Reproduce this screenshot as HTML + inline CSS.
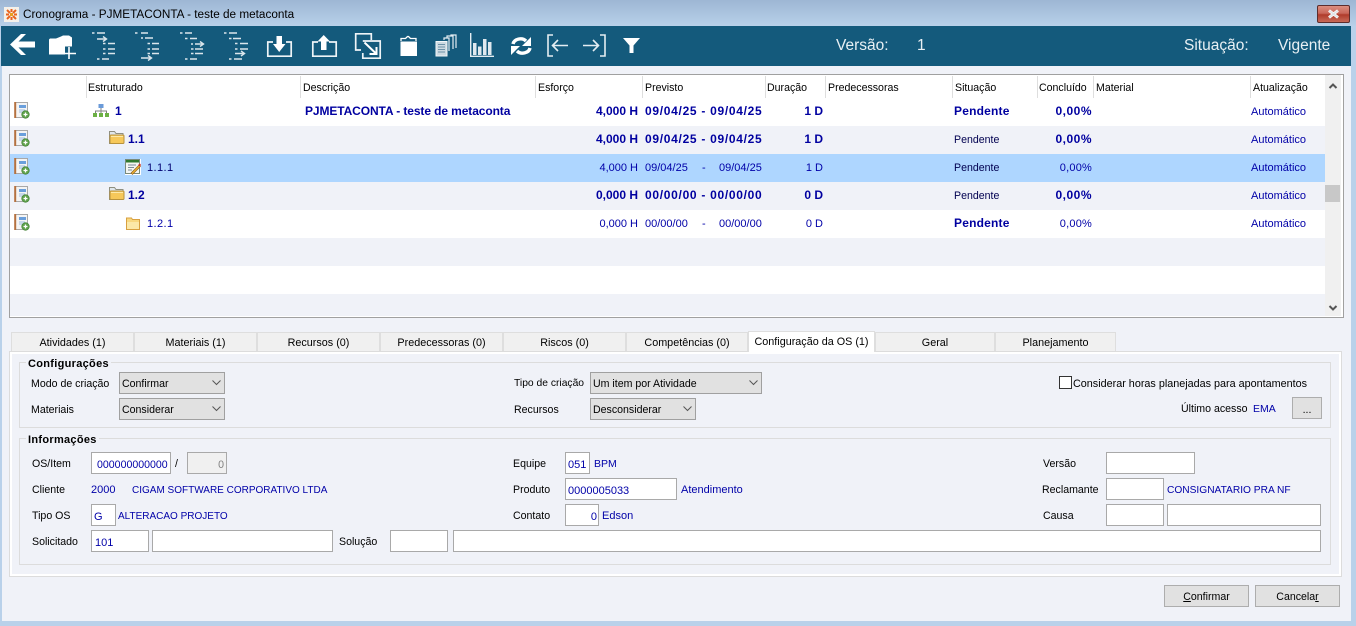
<!DOCTYPE html>
<html lang="pt"><head><meta charset="utf-8"><title>Cronograma</title>
<style>
html,body{margin:0;padding:0;width:1356px;height:626px;overflow:hidden;background:#b9d1ea}
body{position:relative;font:10.6px/14px "Liberation Sans",sans-serif;color:#000}
div,span{position:absolute;box-sizing:border-box}
.t{white-space:nowrap;height:14px;margin-top:1px}
.n{color:#0000a8;font-size:11px}
.nb{color:#0000a0;font-weight:bold;font-size:12px}
.d{letter-spacing:.7px}
.p{letter-spacing:.2px}
.k{letter-spacing:.5px}
.r{text-align:right}
.i{background:#fff;border:1px solid #a9a9a9}
.s{background:#e1e1e1;border:1px solid #a0a0a0}
.btn{background:#e1e1e1;border:1px solid #adadad;text-align:center;line-height:22px}
.tab{top:332px;height:19px;background:#f0f0f0;border:1px solid #dedede;border-bottom:0;text-align:center;line-height:20px;font-size:10.8px}
.sep{top:76px;width:1px;height:22px;background:#dedede}
.row{left:10px;width:1315px;height:28px}
.fs{border:1px solid #dcdcdc}
.lg{background:#f0f2f8;padding:0 2px;font-weight:bold;height:14px;white-space:nowrap;font-size:11px;letter-spacing:.3px}
.top{margin-top:0;height:16px;line-height:16px;font-size:15.5px;color:#e8f0f4}
svg{position:absolute;overflow:visible}
u{text-decoration:underline}
</style></head><body>

<!-- title bar -->
<div style="left:0;top:0;width:1356px;height:26px;background:linear-gradient(#9db6d4,#b8d0e9)"></div>
<svg style="left:4px;top:7px" width="15" height="15" viewBox="0 0 15 15"><rect width="15" height="15" fill="#f4f1ea"/><path d="M3 3l3 3M3 12l3-3M12 3L9 6M12 12L9 9M7.500 2v3M7.500 10v3M2 7.500h3M10 7.500h3" stroke="#e8641e" stroke-width="2"/><rect x="6" y="6" width="3" height="3" fill="#e8a01e"/></svg>
<span class="t" style="left:23px;top:7px;font-size:11.75px">Cronograma - PJMETACONTA - teste de metaconta</span>
<div style="left:1317px;top:5px;width:33px;height:18px;border:1px solid #5c2d2d;border-radius:2px;background:linear-gradient(#dc8f80 0,#c9675a 45%,#b03c2c 55%,#c86a58 100%)"></div>
<svg style="left:1326px;top:9px" width="15" height="10" viewBox="0 0 15 10"><path d="M3 1.500l9 7M12 1.500l-9 7" stroke="#fff" stroke-width="3"/><path d="M3 1.500l9 7M12 1.500l-9 7" stroke="#dfe4e8" stroke-width="1.500"/></svg>

<!-- main surface -->
<div style="left:2px;top:26px;width:1349px;height:595px;background:#f0f2f8"></div>
<!-- toolbar -->
<div style="left:1px;top:26px;width:1350px;height:40px;background:#145a7c"></div>
<svg style="left:0;top:0" width="700" height="66" viewBox="0 0 700 66">
 <polygon points="10,44.500 21,34 26,34 18.500,41.500 35,41.500 35,47.500 18.500,47.500 26,55 21,55" fill="#fff"/>
 <path d="M49 39.500l1-1h6l5-2 2-1h6l3 2v9h-7v8H49z" fill="#fff"/>
 <path d="M69 47v12M62 53.500h14" stroke="#fff" stroke-width="1.600" fill="none"/>
 <g stroke="#dbe6ec" stroke-width="1.400" fill="none">
  <path d="M92 33h2.500M97 33h8M97 39h9M103 43.500h2.500M108 43.500h7M103 49h2.500M108 49h7M103 53.500h2.500M108 53.500h7M97 59h2.500M102 59h7"/>
  <path d="M103 36.500l3.500 2.500-3.500 2.500"/>
  <path d="M135 33h2.500M141 33h7M141 38h2M145 38h8M147.500 43.500h2.500M152 43.500h7M147.500 49h2.500M152 49h7M147.500 53.500h2.500M152 53.500h7M141 58h10"/>
  <path d="M148 55.500l3.500 2.500-3.500 2.500"/>
  <path d="M180 33h2.500M185 33h7M185 38.500h2.500M190 38.500h7M191 44h2M195 44h8M191 49h2.500M195 49h8M191 53.500h2.500M195 53.500h8M185 59h2.500M190 59h7"/>
  <path d="M200 41.500l3.500 2.500-3.500 2.500"/>
  <path d="M224 33h2.500M229 33h8M229 38.500h2.500M233 38.500h8M235 43.500h2.500M240 43.500h8M235 49h2.500M240 49h8M235 53.500h9M229 59h2.500M234 59h8"/>
  <path d="M241 51l3.500 2.500-3.500 2.500"/>
 </g>
 <g fill="none" stroke="#eef4f7" stroke-width="1.700">
  <path d="M273 42h-5.200v14.200h23.400V42H286"/>
  <path d="M318 42h-5.200v14.200h23.400V42H329"/>
  <path d="M361 50h-5.300V33.800h15.600V40"/>
  <path d="M362.800 41h17.400v17.200h-17.400V53"/>
 </g>
 <polygon points="276.500,36 282,36 282,44 285.500,44 279.200,52 273,44 276.500,44" fill="#fff"/>
 <polygon points="321,50 326.500,50 326.500,41.500 330,41.500 323.700,35 317.500,41.500 321,41.500" fill="#fff"/>
 <path d="M364.500 42.500l11.500 11M376.500 47v7h-7" fill="none" stroke="#fff" stroke-width="2"/>
 <path d="M400.500 41.500h16.500V56h-16.500z" fill="#fff"/>
 <path d="M401 41v-2.500h4.500l2-2 1 0 2 2h5.500V41" fill="none" stroke="#fff" stroke-width="1.300"/>
 <g fill="none" stroke="#e4edf2">
  <path d="M444 40v-2h5v13M447 37.500v-1.500h6v13M451 35.500v-.5h5v13" stroke-width="1.200"/>
  <rect x="436" y="41.500" width="11" height="14.500" fill="#cddae2" stroke="#f2f6f8"/>
  <path d="M438 44.500h7M438 47h7M438 49.500h7M438 52h7" stroke="#6d92a8"/>
  <path d="M470.700 33v23.300H494" stroke-width="1.400"/>
 </g>
 <path d="M473 43h3.500v12H473zM478 46.500h3.500V55H478zM483 39h3.500v16H483zM488 42h3.500v13H488z" fill="#dfe8ee"/>
 <g fill="none" stroke="#fff" stroke-width="3.400">
  <path d="M513 44c1-5 9-7 13-3"/>
  <path d="M530 48c-1 5-9 7-13 3"/>
 </g>
 <path d="M531 37v9h-9zM511 55v-9h9z" fill="#fff"/>
 <g fill="none" stroke="#e4edf2" stroke-width="1.600">
  <path d="M553 35h-5v21h5M568 45.500h-15M558 40l-5.500 5.500 5.500 5.500"/>
  <path d="M600 35h5v21h-5M583 45.500h15M593 40l5.500 5.500-5.500 5.500"/>
 </g>
 <path d="M623 38h17l-6.500 7.500V53h-4v-7.500z" fill="#fff"/>
</svg>
<span class="t top" style="left:836px;top:38px">Versão:</span>
<span class="t top" style="left:917px;top:38px">1</span>
<span class="t top" style="left:1184px;top:38px">Situação:</span>
<span class="t top" style="left:1278px;top:38px">Vigente</span>

<!-- grid -->
<div style="left:9px;top:74px;width:1335px;height:244px;background:#fff;border:1px solid #a0a0a0"></div>
<div class="row" style="top:126px;background:#f0f2f8"></div>
<div class="row" style="top:154px;background:#aed6ff"></div>
<div class="row" style="top:182px;background:#f0f2f8"></div>
<div class="row" style="top:238px;background:#f0f2f8"></div>
<div class="row" style="top:294px;height:22px;background:#f0f2f8"></div>
<div style="left:1325px;top:75px;width:16px;height:241px;background:#f0f0f0"></div>
<div style="left:1325px;top:185px;width:15px;height:17px;background:#c8c8c8"></div>
<svg style="left:1328px;top:82px" width="10" height="8"><path d="M1.500 6L5 2.500 8.500 6" fill="none" stroke="#555" stroke-width="2"/></svg>
<svg style="left:1328px;top:304px" width="10" height="8"><path d="M1.500 2L5 5.500 8.500 2" fill="none" stroke="#555" stroke-width="2"/></svg>

<div class="sep" style="left:86px"></div><div class="sep" style="left:300px"></div><div class="sep" style="left:535px"></div><div class="sep" style="left:642px"></div><div class="sep" style="left:765px"></div><div class="sep" style="left:825px"></div><div class="sep" style="left:952px"></div><div class="sep" style="left:1037px"></div><div class="sep" style="left:1093px"></div><div class="sep" style="left:1250px"></div>
<span class="t" style="left:88px;top:80px">Estruturado</span>
<span class="t" style="left:303px;top:80px">Descrição</span>
<span class="t" style="left:538px;top:80px">Esforço</span>
<span class="t" style="left:645px;top:80px">Previsto</span>
<span class="t" style="left:767px;top:80px">Duração</span>
<span class="t" style="left:828px;top:80px">Predecessoras</span>
<span class="t" style="left:955px;top:80px">Situação</span>
<span class="t" style="left:1039px;top:80px">Concluído</span>
<span class="t" style="left:1096px;top:80px">Material</span>
<span class="t" style="left:1253px;top:80px">Atualização</span>

<!-- row icons -->
<svg width="0" height="0" style="left:0;top:0"><defs>
 <g id="ri">
  <rect x="1" y="0.500" width="12.500" height="15" fill="#f4f4f4" stroke="#a8a8a8"/>
  <path d="M1.200 0v16" stroke="#b5713f" stroke-width="2"/>
  <rect x="5" y="3" width="7" height="3" fill="#6a9fdc"/>
  <path d="M5 8h6M5 10h4" stroke="#9dbde0"/>
  <circle cx="11.500" cy="12.500" r="3.800" fill="#5ea04a" stroke="#3f7f33" stroke-width=".6"/>
  <path d="M9.500 12.500h4M11.500 10.500v4" stroke="#fff" stroke-width="1.300"/>
 </g>
 <g id="fo">
  <path d="M.5 1.500h5l1.500 2h7v10H.5z" fill="#dfe6ec" stroke="#8f8f80"/>
  <rect x="1" y="5" width="14" height="8.500" rx="1" fill="#f6c85a" stroke="#b8923c"/>
  <path d="M2 6.500h12" stroke="#fde9a8"/>
 </g>
</defs></svg>
<svg style="left:14px;top:102px" width="16" height="16"><use href="#ri"/></svg>
<svg style="left:14px;top:130px" width="16" height="16"><use href="#ri"/></svg>
<svg style="left:14px;top:158px" width="16" height="16"><use href="#ri"/></svg>
<svg style="left:14px;top:186px" width="16" height="16"><use href="#ri"/></svg>
<svg style="left:14px;top:214px" width="16" height="16"><use href="#ri"/></svg>

<svg style="left:93px;top:104px" width="16" height="14"><rect x="5.500" y="0" width="5" height="4" fill="#6a9ad8"/><path d="M8 4v3M2.500 9V7h11v2M8 7v2" stroke="#808080" fill="none"/><rect x="0" y="9" width="4" height="4" fill="#6cb044"/><rect x="6" y="9" width="4" height="4" fill="#6cb044"/><rect x="12" y="9" width="4" height="4" fill="#6cb044"/></svg>
<svg style="left:109px;top:130px" width="16" height="15"><use href="#fo"/></svg>
<svg style="left:109px;top:186px" width="16" height="15"><use href="#fo"/></svg>
<svg style="left:125px;top:159px" width="16" height="16"><rect width="16" height="16" fill="#fff"/><rect x=".5" y=".5" width="14" height="14" fill="#f4f6f2" stroke="#7a8a7a"/><rect x="1" y="1" width="13" height="2.500" fill="#2f7a2f"/><path d="M3 6h8M3 8.500h6M3 11h4" stroke="#7a8a98"/><path d="M6 14l8-8 1.500 1.500-8 8z" fill="#e8b030" stroke="#8a5a20" stroke-width=".6"/><path d="M13 6l2-1.500 1 1.500-1 1.500z" fill="#c83020"/></svg>
<svg style="left:126px;top:217px" width="14" height="13"><path d="M.5 2.500V1h5l1 1.500h7v10H.5z" fill="#f8d880" stroke="#d8a040"/><path d="M1 5h12v7H1z" fill="#fbe8a8"/></svg>

<span class="t nb" style="left:115px;top:103px">1</span>
<span class="t nb" style="left:305px;top:103px;letter-spacing:-.1px">PJMETACONTA - teste de metaconta</span>
<span class="t nb r" style="right:718px;top:103px">4,000 H</span>
<span class="t nb d" style="left:645px;top:103px">09/04/25 - 09/04/25</span>
<span class="t nb r" style="right:533px;top:103px">1 D</span>
<span class="t nb p" style="left:954px;top:103px">Pendente</span>
<span class="t nb r k" style="right:264px;top:103px">0,00%</span>
<span class="t n" style="left:1251px;top:104px">Automático</span>

<span class="t nb" style="left:128px;top:131px">1.1</span>
<span class="t nb r" style="right:718px;top:131px">4,000 H</span>
<span class="t nb d" style="left:645px;top:131px">09/04/25 - 09/04/25</span>
<span class="t nb r" style="right:533px;top:131px">1 D</span>
<span class="t" style="left:954px;top:132px;color:#000050">Pendente</span>
<span class="t nb r k" style="right:264px;top:131px">0,00%</span>
<span class="t n" style="left:1251px;top:132px">Automático</span>

<span class="t n" style="left:147px;top:160px;color:#000070;letter-spacing:.4px">1.1.1</span>
<span class="t n r" style="right:718px;top:160px">4,000 H</span>
<span class="t n" style="left:645px;top:160px">09/04/25</span><span class="t n" style="left:702px;top:160px">-</span><span class="t n" style="left:719px;top:160px">09/04/25</span>
<span class="t n r" style="right:533px;top:160px">1 D</span>
<span class="t" style="left:954px;top:160px;color:#000050">Pendente</span>
<span class="t n r" style="right:264px;top:160px;letter-spacing:.2px">0,00%</span>
<span class="t n" style="left:1251px;top:160px">Automático</span>

<span class="t nb" style="left:128px;top:187px">1.2</span>
<span class="t nb r" style="right:718px;top:187px">0,000 H</span>
<span class="t nb d" style="left:645px;top:187px">00/00/00 - 00/00/00</span>
<span class="t nb r" style="right:533px;top:187px">0 D</span>
<span class="t" style="left:954px;top:188px;color:#000050">Pendente</span>
<span class="t nb r k" style="right:264px;top:187px">0,00%</span>
<span class="t n" style="left:1251px;top:188px">Automático</span>

<span class="t n" style="left:147px;top:216px;letter-spacing:.4px">1.2.1</span>
<span class="t n r" style="right:718px;top:216px">0,000 H</span>
<span class="t n" style="left:645px;top:216px">00/00/00</span><span class="t n" style="left:702px;top:216px">-</span><span class="t n" style="left:719px;top:216px">00/00/00</span>
<span class="t n r" style="right:533px;top:216px">0 D</span>
<span class="t nb p" style="left:954px;top:215px">Pendente</span>
<span class="t n r" style="right:264px;top:216px;letter-spacing:.2px">0,00%</span>
<span class="t n" style="left:1251px;top:216px">Automático</span>

<!-- tab panel -->
<div style="left:9px;top:351px;width:1333px;height:226px;background:#f0f2f8;border:1px solid #dcdcdc;box-shadow:inset 0 0 0 2px #fff"></div>
<div class="tab" style="left:11px;width:123px">Atividades (1)</div>
<div class="tab" style="left:134px;width:123px">Materiais (1)</div>
<div class="tab" style="left:257px;width:123px">Recursos (0)</div>
<div class="tab" style="left:380px;width:123px">Predecessoras (0)</div>
<div class="tab" style="left:503px;width:123px">Riscos (0)</div>
<div class="tab" style="left:626px;width:122px">Competências (0)</div>
<div class="tab" style="left:748px;top:331px;width:127px;height:21px;background:#fff;line-height:20px;z-index:2">Configuração da OS (1)</div>
<div class="tab" style="left:875px;width:120px">Geral</div>
<div class="tab" style="left:995px;width:121px">Planejamento</div>

<div class="fs" style="left:19px;top:362px;width:1312px;height:66px"></div>
<span class="lg" style="left:26px;top:357px">Configurações</span>
<div class="fs" style="left:19px;top:438px;width:1312px;height:127px"></div>
<span class="lg" style="left:26px;top:433px">Informações</span>

<span class="t" style="left:31px;top:376px">Modo de criação</span>
<div class="s" style="left:119px;top:372px;width:106px;height:22px"></div>
<span class="t" style="left:122px;top:376px">Confirmar</span>
<span class="t" style="left:31px;top:402px">Materiais</span>
<div class="s" style="left:119px;top:398px;width:106px;height:22px"></div>
<span class="t" style="left:122px;top:402px">Considerar</span>
<span class="t" style="left:514px;top:376px;font-size:10.3px">Tipo de criação</span>
<div class="s" style="left:590px;top:372px;width:172px;height:22px"></div>
<span class="t" style="left:593px;top:376px">Um item por Atividade</span>
<span class="t" style="left:514px;top:402px">Recursos</span>
<div class="s" style="left:590px;top:398px;width:106px;height:22px"></div>
<span class="t" style="left:593px;top:402px">Desconsiderar</span>
<svg style="left:212px;top:380px" width="9" height="6"><path d="M.5.500l4 4 4-4" fill="none" stroke="#555"/></svg>
<svg style="left:212px;top:406px" width="9" height="6"><path d="M.5.500l4 4 4-4" fill="none" stroke="#555"/></svg>
<svg style="left:749px;top:380px" width="9" height="6"><path d="M.5.500l4 4 4-4" fill="none" stroke="#555"/></svg>
<svg style="left:683px;top:406px" width="9" height="6"><path d="M.5.500l4 4 4-4" fill="none" stroke="#555"/></svg>

<div style="left:1059px;top:376px;width:13px;height:13px;background:#fff;border:1px solid #333"></div>
<span class="t" style="left:1073px;top:376px;font-size:10.8px">Considerar horas planejadas para apontamentos</span>
<span class="t" style="left:1181px;top:401px">Último acesso</span>
<span class="t n" style="left:1253px;top:401px;font-size:10.5px">EMA</span>
<div class="btn" style="left:1292px;top:397px;width:30px;height:22px;line-height:24px">...</div>

<span class="t" style="left:32px;top:456px">OS/Item</span>
<div class="i" style="left:91px;top:452px;width:80px;height:22px"></div>
<span class="t n" style="left:97px;top:457px;font-size:10.6px">000000000000</span>
<span class="t" style="left:175px;top:456px">/</span>
<div style="left:187px;top:452px;width:40px;height:22px;background:#f0f0f0;border:1px solid #a9a9a9"></div>
<span class="t r" style="right:1132px;top:457px;color:#808080">0</span>

<span class="t" style="left:32px;top:482px">Cliente</span>
<span class="t n" style="left:91px;top:482px">2000</span>
<span class="t n" style="left:132px;top:483px;font-size:10px">CIGAM SOFTWARE CORPORATIVO LTDA</span>

<span class="t" style="left:32px;top:508px">Tipo OS</span>
<div class="i" style="left:91px;top:504px;width:25px;height:22px"></div>
<span class="t n" style="left:94px;top:509px">G</span>
<span class="t n" style="left:118px;top:509px;font-size:10px">ALTERACAO PROJETO</span>

<span class="t" style="left:32px;top:534px">Solicitado</span>
<div class="i" style="left:91px;top:530px;width:58px;height:22px"></div>
<span class="t n" style="left:95px;top:535px">101</span>
<div class="i" style="left:152px;top:530px;width:181px;height:22px"></div>
<span class="t" style="left:339px;top:534px">Solução</span>
<div class="i" style="left:390px;top:530px;width:58px;height:22px"></div>
<div class="i" style="left:453px;top:530px;width:868px;height:22px"></div>

<span class="t" style="left:513px;top:456px">Equipe</span>
<div class="i" style="left:565px;top:452px;width:25px;height:22px"></div>
<span class="t n" style="left:568px;top:457px">051</span>
<span class="t n" style="left:594px;top:456px;font-size:10.5px">BPM</span>
<span class="t" style="left:513px;top:482px">Produto</span>
<div class="i" style="left:565px;top:478px;width:112px;height:22px"></div>
<span class="t n" style="left:568px;top:483px">0000005033</span>
<span class="t n" style="left:681px;top:482px">Atendimento</span>
<span class="t" style="left:513px;top:508px">Contato</span>
<div class="i" style="left:565px;top:504px;width:34px;height:22px"></div>
<span class="t n r" style="right:759px;top:509px">0</span>
<span class="t n" style="left:602px;top:508px">Edson</span>

<span class="t" style="left:1043px;top:456px">Versão</span>
<div class="i" style="left:1106px;top:452px;width:89px;height:22px"></div>
<span class="t" style="left:1042px;top:482px">Reclamante</span>
<div class="i" style="left:1106px;top:478px;width:58px;height:22px"></div>
<span class="t n" style="left:1167px;top:483px;font-size:10.2px">CONSIGNATARIO PRA NF</span>
<span class="t" style="left:1043px;top:508px">Causa</span>
<div class="i" style="left:1106px;top:504px;width:58px;height:22px"></div>
<div class="i" style="left:1167px;top:504px;width:154px;height:22px"></div>

<div class="btn" style="left:1164px;top:585px;width:85px;height:22px"><u>C</u>onfirmar</div>
<div class="btn" style="left:1255px;top:585px;width:85px;height:22px">Cancela<u>r</u></div>
</body></html>
